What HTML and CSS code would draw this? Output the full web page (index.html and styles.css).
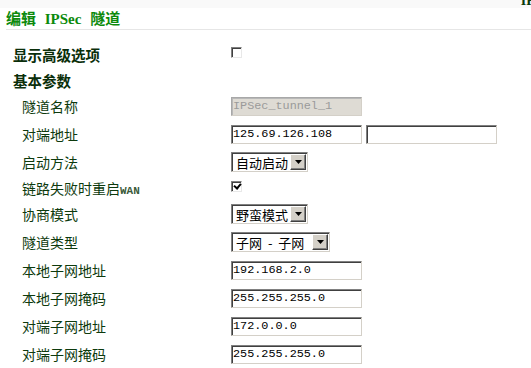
FILE: index.html
```html
<!DOCTYPE html>
<html lang="zh-CN">
<head>
  <meta charset="UTF-8" />
  <title>编辑 IPSec 隧道</title>
  <link rel="stylesheet" href="styles.css">
</head>
<body>

  <div class="topbar"><span class="crumb">IPSec</span></div>

  <h2 class="title">编辑 IPSec 隧道</h2>

  <form class="form">

    <div class="section first">
      <span class="section-name">显示高级选项</span>
      <input type="checkbox" class="check up" id="advanced" />
    </div>

    <div class="section basic">
      <span class="section-name">基本参数</span>
    </div>

    <div class="row">
      <label for="tunnelName">隧道名称</label>
      <input type="text" id="tunnelName" value="IPSec_tunnel_1" disabled />
    </div>

    <div class="row">
      <label for="peerAddr">对端地址</label>
      <div class="pair">
        <input type="text" id="peerAddr" value="125.69.126.108" />
        <input type="text" id="peerAddr2" value="" />
      </div>
    </div>

    <div class="row">
      <label for="startMode">启动方法</label>
      <span class="combo">
        <select id="startMode">
          <option>自动启动</option>
          <option>手动启动</option>
        </select>
        <span class="drop"><svg width="7" height="4" viewBox="0 0 7 4"><path d="M0 0h7L3.5 4z" fill="#000"/></svg></span>
      </span>
    </div>

    <div class="row short">
      <label for="restartWan">链路失败时重启<span class="latin">WAN</span></label>
      <input type="checkbox" class="check up" id="restartWan" checked />
    </div>

    <div class="row">
      <label for="negMode">协商模式</label>
      <span class="combo">
        <select id="negMode">
          <option>野蛮模式</option>
          <option>主模式</option>
        </select>
        <span class="drop"><svg width="7" height="4" viewBox="0 0 7 4"><path d="M0 0h7L3.5 4z" fill="#000"/></svg></span>
      </span>
    </div>

    <div class="row">
      <label for="tunnelType">隧道类型</label>
      <span class="combo wide">
        <select id="tunnelType">
          <option>子网 - 子网</option>
          <option>主机 - 子网</option>
        </select>
        <span class="drop"><svg width="7" height="4" viewBox="0 0 7 4"><path d="M0 0h7L3.5 4z" fill="#000"/></svg></span>
      </span>
    </div>

    <div class="row">
      <label for="localNet">本地子网地址</label>
      <input type="text" id="localNet" value="192.168.2.0" />
    </div>

    <div class="row">
      <label for="localMask">本地子网掩码</label>
      <input type="text" id="localMask" value="255.255.255.0" />
    </div>

    <div class="row">
      <label for="peerNet">对端子网地址</label>
      <input type="text" id="peerNet" value="172.0.0.0" />
    </div>

    <div class="row">
      <label for="peerMask">对端子网掩码</label>
      <input type="text" id="peerMask" value="255.255.255.0" />
    </div>

  </form>

</body>
</html>
```

FILE: styles.css
```css
:root {
  --green: #0c8a0c;
  --dark: #0d3a0d;
  --face: #d4d0c8;
  --shadow: #404040;
}

* { box-sizing: border-box; }

body {
  margin: 0;
  font-family: 'Liberation Serif', 'Noto Sans CJK SC', serif;
  font-size: 14px;
  color: var(--dark);
  background: #fff;
  overflow: hidden;
}

.topbar {
  height: 8px;
  background: #f9f9f9;
  overflow: hidden;
  display: flex;
  justify-content: flex-end;
}

.crumb {
  font-weight: bold;
  font-size: 14px;
  line-height: 14px;
  margin-top: -6px;
  margin-right: -24px;
  color: #0a3a0a;
  white-space: nowrap;
}

.title {
  margin: 0 0 0 6px;
  height: 22px;
  line-height: 23px;
  font-size: 15px;
  font-weight: bold;
  color: var(--green);
  word-spacing: 5px;
  border-bottom: 1px solid #e6e6e6;
}

.form {
  margin: 0;
  padding-top: 10px;
}

.section {
  display: flex;
  align-items: center;
  padding-left: 13px;
  height: 28px;
}

.section-name {
  width: 218px;
  font-weight: bold;
  font-size: 14.5px;
  color: #0a2e0a;
}

.section.basic {
  height: 24px;
  align-items: flex-start;
  padding-top: 4px;
  line-height: 20px;
}

.row {
  display: flex;
  align-items: center;
  height: 28px;
  padding-left: 22px;
}

.row.short { height: 24px; }

.row label {
  width: 209px;
  color: var(--dark);
}

.latin {
  font-family: 'Liberation Mono', monospace;
  font-size: 11px;
  font-weight: bold;
  color: #3a5a3a;
}

.pair {
  display: flex;
  gap: 4px;
}

input[type="text"] {
  width: 131px;
  height: 19px;
  margin: 0;
  padding: 0 1px;
  font-family: 'Liberation Mono', monospace;
  font-size: 11.8px;
  color: #000;
  background: #fff;
  border: 1px solid;
  border-color: #808080 var(--face) var(--face) #808080;
  box-shadow: inset 1px 1px var(--shadow);
  outline: none;
}

input[type="text"]:disabled {
  background: #dedbd4;
  color: #9a9a9a;
  border-color: #a8a8a8 var(--face) var(--face) #a8a8a8;
  box-shadow: inset 1px 1px #b8b8b8;
}

.check {
  appearance: none;
  position: relative;
  width: 11px;
  height: 11px;
  margin: 0;
  background: #fff;
  border: 1px solid;
  border-color: #808080 #e8e8e8 #e8e8e8 #808080;
  box-shadow: inset 1px 1px var(--shadow);
}

.check.up { margin-bottom: 3px; }

.check:checked::after {
  content: '';
  position: absolute;
  left: 2px;
  top: 1px;
  width: 5px;
  height: 3px;
  border-left: 2px solid #000;
  border-bottom: 2px solid #000;
  transform: rotate(-50deg);
}

.combo {
  position: relative;
  display: inline-block;
  width: 77px;
  height: 20px;
}

.combo.wide { width: 99px; }

.combo select {
  appearance: none;
  width: 100%;
  height: 100%;
  margin: 0;
  padding: 0 0 0 4px;
  font-family: 'Noto Sans CJK SC', sans-serif;
  font-size: 13px;
  word-spacing: 3px;
  color: #000;
  background: #fff;
  border: 1px solid;
  border-color: #808080 var(--face) var(--face) #808080;
  box-shadow: inset 1px 1px var(--shadow);
  border-radius: 0;
  outline: none;
}

.drop {
  position: absolute;
  right: 2px;
  top: 2px;
  width: 16px;
  height: 16px;
  display: flex;
  align-items: center;
  justify-content: center;
  background: var(--face);
  border: 1px solid;
  border-color: #fff var(--shadow) var(--shadow) #fff;
  box-shadow: inset -1px -1px #808080;
  pointer-events: none;
}
```
